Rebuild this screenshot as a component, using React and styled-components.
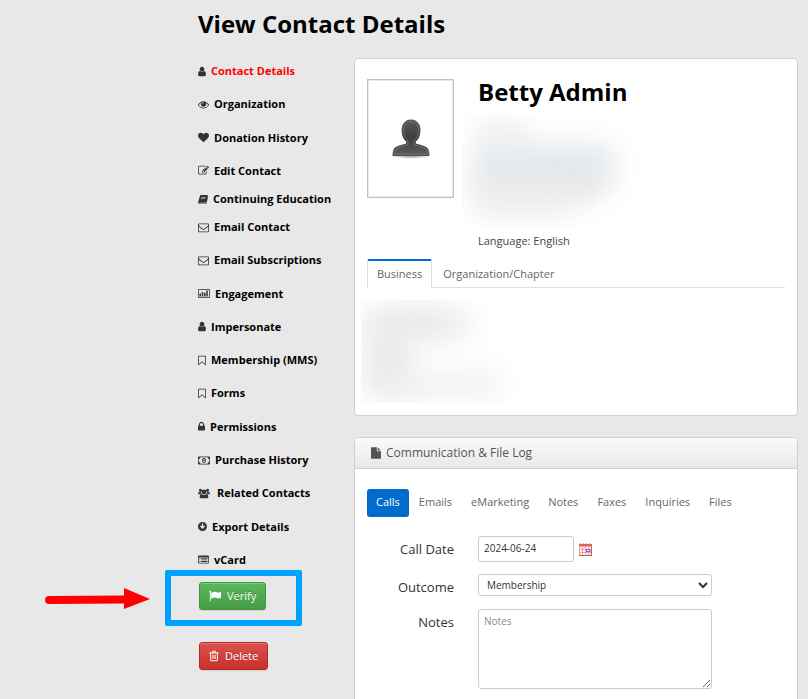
import React, { useState } from "react";
import styled, { createGlobalStyle } from "styled-components";

const GlobalStyle = createGlobalStyle`
  * { box-sizing: border-box; }
  html { scrollbar-width: none; }
  body {
    margin: 0;
    background: #e8e8e8;
    color: #444;
    font-family: "Open Sans", "Noto Sans", sans-serif;
    font-size: 11px;
    line-height: 18px;
  }
  button, input, select, textarea { font: inherit; }
`;

const Page = styled.div`
  padding: 8px 10px 0 198px;
`;

const Title = styled.h1`
  margin: 0 0 18px;
  color: #000;
  font-size: 24px;
  line-height: 32px;
`;

const Columns = styled.div`
  display: grid;
  grid-template-columns: 156px minmax(0, 1fr);
`;

const Sidebar = styled.aside`
  padding-top: 4px;
`;

const NavList = styled.ul`
  display: flex;
  flex-direction: column;
  justify-content: space-between;
  height: ${({ $height }) => $height}px;
  margin: 0 0 10px;
  padding: 0;
  list-style: none;
`;

const NavLink = styled.a`
  display: flex;
  align-items: center;
  gap: ${({ $wide }) => ($wide ? 7 : 5)}px;
  color: ${({ $active }) => ($active ? "#ff0000" : "#000")};
  font-weight: bold;
  text-decoration: none;
  white-space: nowrap;
`;

const Icon = styled.svg`
  flex: none;
  width: ${({ $width }) => $width}px;
  height: ${({ $height = 11 }) => $height}px;
  color: ${({ $color = "#333" }) => $color};
  fill: currentColor;
`;

const Actions = styled.div`
  display: flex;
  flex-direction: column;
  align-items: flex-start;
  gap: 32px;
  margin: 13px 0 0 1px;
`;

const ActionButton = styled.button`
  display: flex;
  align-items: center;
  gap: 6px;
  height: 28px;
  padding: 0 9px;
  border: 1px solid ${({ $danger }) => ($danger ? "#b52b27" : "#419641")};
  border-radius: 3px;
  background: ${({ $danger }) =>
    $danger
      ? "linear-gradient(#d9534f, #c9302c)"
      : "linear-gradient(#5cb85c, #449d44)"};
  box-shadow: inset 0 1px 0 rgba(255, 255, 255, 0.2), 0 1px 1px rgba(0, 0, 0, 0.1);
  color: #fff;
  text-shadow: 0 -1px 0 rgba(0, 0, 0, 0.25);
`;

const Highlighted = styled.div`
  position: relative;
`;

const Callout = styled.div`
  position: absolute;
  top: -12px;
  left: -34px;
  width: 137px;
  height: 56px;
  border: 6px solid #00a2ff;
  border-radius: 2px;
  pointer-events: none;
`;

const Arrow = styled.svg`
  position: absolute;
  top: 6px;
  left: -154px;
  width: 106px;
  height: 22px;
`;

const Main = styled.main`
  display: flex;
  flex-direction: column;
  gap: 21px;
`;

const Card = styled.section`
  border: 1px solid #d0d0d0;
  border-radius: 4px;
  background: #fff;
`;

const CardBody = styled.div`
  padding: 20px 12px 12px;
`;

const Profile = styled.div`
  display: flex;
  gap: 24px;
`;

const Photo = styled.div`
  display: grid;
  place-items: center;
  width: 87px;
  height: 119px;
  border: 1px solid #c3c3c3;
  box-shadow: inset 0 0 0 1px #e8e8e8;
`;

const Name = styled.h2`
  margin: 0 0 10px;
  color: #000;
  font-size: 24px;
  line-height: 26px;
`;

const Hidden = styled.div`
  position: relative;
  overflow: hidden;
  width: ${({ $width }) => $width}px;
  height: ${({ $height }) => $height}px;
  margin-left: ${({ $outdent }) => -$outdent}px;
`;

const Smudge = styled.div`
  position: absolute;
  top: ${({ $top }) => $top}px;
  left: ${({ $left }) => $left}px;
  width: ${({ $width }) => $width}px;
  height: ${({ $height }) => $height}px;
  background: ${({ $color = "#ebebeb" }) => $color};
  filter: blur(14px);
`;

const Language = styled.p`
  margin: 5px 0 9px;
`;

const Tabs = styled.div`
  display: flex;
  gap: 1px;
  height: 29px;
  margin-bottom: 12px;
  border-bottom: 1px solid #ddd;
`;

const Tab = styled.button`
  height: 29px;
  padding: 0 9px 2px;
  border: 1px solid ${({ $active }) => ($active ? "#ddd" : "transparent")};
  border-top: 2px solid ${({ $active }) => ($active ? "#006dcc" : "transparent")};
  border-bottom: 0;
  border-radius: 2px 2px 0 0;
  background: ${({ $active }) => ($active ? "#fff" : "transparent")};
  color: #666;
`;

const CardHeader = styled.header`
  display: flex;
  align-items: center;
  gap: 5px;
  height: 31px;
  padding: 0 16px;
  border-bottom: 1px solid #d0d0d0;
  border-radius: 4px 4px 0 0;
  background: linear-gradient(#fafafa, #e8e8e8);
`;

const CardTitle = styled.h3`
  margin: 0;
  color: #555;
  font-size: 12px;
  font-weight: normal;
`;

const Pills = styled.div`
  display: flex;
  gap: 1px;
  margin-bottom: 19px;
`;

const Pill = styled.button`
  height: 28px;
  padding: 0 9px 2px;
  border: 0;
  border-radius: 3px;
  background: ${({ $active }) => ($active ? "#006dcc" : "transparent")};
  color: ${({ $active }) => ($active ? "#fff" : "#666")};
`;

const FormRow = styled.div`
  display: grid;
  grid-template-columns: 87px minmax(0, 1fr);
  align-items: start;
  column-gap: 24px;
  margin-bottom: 12px;
`;

const Label = styled.label`
  padding: 4px 0 1px;
  color: #333;
  font-size: 13px;
  text-align: right;
`;

const Field = styled.div`
  display: flex;
  align-items: center;
  gap: 5px;
`;

const DateInput = styled.input`
  width: 96px;
  height: 26px;
  padding: 0 5px 2px;
  border: 1px solid #ccc;
  border-radius: 3px;
  color: #333;
  font-size: 10px;
`;

const CalendarButton = styled.button`
  display: flex;
  padding: 0;
  border: 0;
  background: none;
`;

const Select = styled.select`
  width: 234px;
  height: 22px;
  padding: 0 4px;
  border: 1px solid #ccc;
  border-radius: 3px;
  background: #fff;
  color: #333;
  font-size: 10px;
`;

const TextArea = styled.textarea`
  display: block;
  width: 234px;
  height: 80px;
  padding: 2px 5px;
  border: 1px solid #ccc;
  border-radius: 3px;
  font-size: 10px;
  &::placeholder { color: #888; }
`;

const icons = {
  user: {
    box: "256 0 1280 1792",
    width: 8,
    d: "M1536 1399q0 109-62.5 187t-150.5 78h-854q-88 0-150.5-78t-62.5-187q0-85 8.5-160.5t31.5-152 58.5-131 94-89 134.5-34.5q131 128 313 128t313-128q76 0 134.5 34.5t94 89 58.5 131 31.5 152 8.5 160.5zm-256-887q0 159-112.5 271.5t-271.5 112.5-271.5-112.5-112.5-271.5 112.5-271.5 271.5-112.5 271.5 112.5 112.5 271.5z",
  },
  eye: {
    d: "M1664 960q-152-236-381-353 61 104 61 225 0 185-131.5 316.5t-316.5 131.5-316.5-131.5-131.5-316.5q0-121 61-225-229 117-381 353 133 205 333.5 326.5t434.5 121.5 434.5-121.5 333.5-326.5zm-720-384q0-20-14-34t-34-14q-125 0-214.5 89.5t-89.5 214.5q0 20 14 34t34 14 34-14 14-34q0-86 61-147t147-61q20 0 34-14t14-34zm848 384q0 34-20 69-140 230-376.5 368.5t-499.5 138.5-499.5-139-376.5-368q-20-35-20-69t20-69q140-229 376.5-368t499.5-139 499.5 139 376.5 368q20 35 20 69z",
  },
  heart: {
    d: "M896 1664q-26 0-44-18l-624-602q-10-8-27.5-26t-55.5-65.5-68-97.5-53.5-121-23.5-138q0-220 127-344t351-124q62 0 126.5 21.5t120 58 95.5 68.5 76 68q36-36 76-68t95.5-68.5 120-58 126.5-21.5q224 0 351 124t127 344q0 221-229 450l-623 600q-18 18-44 18z",
  },
  edit: {
    d: "M888 1184l116-116-152-152-116 116v56h96v96h56zm440-720q-16-16-33 1l-350 350q-17 17-1 33t33-1l350-350q17-17 1-33zm80 594v190q0 119-84.5 203.5t-203.5 84.5h-832q-119 0-203.5-84.5t-84.5-203.5v-832q0-119 84.5-203.5t203.5-84.5h832q63 0 117 25 15 7 18 23 3 17-9 29l-49 49q-14 14-32 8-23-6-45-6h-832q-66 0-113 47t-47 113v832q0 66 47 113t113 47h832q66 0 113-47t47-113v-126q0-13 9-22l64-64q15-15 35-7t20 29zm-96-738l288 288-672 672h-288v-288zm444 132l-92 92-288-288 92-92q28-28 68-28t68 28l152 152q28 28 28 68t-28 68z",
  },
  book: {
    box: "64 0 1664 1792",
    width: 10,
    d: "M560 130H1560Q1760 180 1715 400L1440 1310Q1400 1420 1290 1430H290Q230 1440 230 1490Q240 1550 330 1550H1360L1630 640L1728 600L1450 1560Q1410 1664 1300 1664H310Q80 1640 64 1400L400 270Q450 140 560 130ZM640 480L610 570H1310L1340 480ZM560 740L530 830H1230L1260 740Z",
  },
  envelope: {
    d: "M1664 1504v-768q-32 36-69 66-268 206-426 338-51 43-83 67t-86.5 48.5-102.5 24.5h-2q-48 0-102.5-24.5t-86.5-48.5-83-67q-158-132-426-338-37-30-69-66v768q0 13 9.5 22.5t22.5 9.5h1472q13 0 22.5-9.5t9.5-22.5zm0-1051v-24.5l-.5-13-3-12.5-5.5-9-9-7.5-14-2.5h-1472q-13 0-22.5 9.5t-9.5 22.5q0 168 147 284 193 152 401 317 6 5 35 29.5t46 37.5 44.5 31.5 50.5 27.5 43 9h2q20 0 43-9t50.5-27.5 44.5-31.5 46-37.5 35-29.5q208-165 401-317 54-43 100.5-115.5t46.5-131.5zm128-37v1088q0 66-47 113t-113 47h-1472q-66 0-113-47t-47-113v-1088q0-66 47-113t113-47h1472q66 0 113 47t47 113z",
  },
  chart: {
    box: "0 0 2048 1792",
    width: 12,
    d: "M160 128H1888Q2048 128 2048 288V1504Q2048 1664 1888 1664H160Q0 1664 0 1504V288Q0 128 160 128ZM128 256V1536H1920V256ZM256 896H512V1408H256ZM640 640H896V1408H640ZM1024 768H1280V1408H1024ZM1408 384H1664V1408H1408Z",
  },
  bookmark: {
    box: "256 0 1280 1792",
    width: 8,
    d: "M1408 256h-1024v1242l423-406 89-85 89 85 423 406v-1242zm12-128q23 0 44 9 33 13 52.5 41t19.5 62v1289q0 34-19.5 62t-52.5 41q-19 8-44 8-48 0-83-32l-441-424-441 424q-36 33-83 33-23 0-44-9-33-13-52.5-41t-19.5-62v-1289q0-34 19.5-62t52.5-41q21-9 44-9h1048z",
  },
  lock: {
    box: "320 0 1152 1792",
    width: 7,
    d: "M640 768h512v-192q0-106-75-181t-181-75-181 75-75 181v192zm832 96v576q0 40-28 68t-68 28h-960q-40 0-68-28t-28-68v-576q0-40 28-68t68-28h32v-192q0-184 132-316t316-132 316 132 132 316v192h32q40 0 68 28t28 68z",
  },
  money: {
    box: "0 0 1920 1792",
    width: 12,
    d: "M64 256H1856Q1920 256 1920 320V1472Q1920 1536 1856 1536H64Q0 1536 0 1472V320Q0 256 64 256ZM384 384Q370 630 128 640V1152Q370 1162 384 1408H1536Q1550 1162 1792 1152V640Q1550 630 1536 384ZM960 480C1170 480 1280 680 1280 896S1170 1312 960 1312S640 1112 640 896S750 480 960 480ZM880 640L768 740L830 800L900 750V1024H780V1120H1140V1024H1020V640Z",
  },
  users: {
    box: "0 0 1920 1792",
    width: 12,
    d: "M384 128A256 256 0 1 1 384 640A256 256 0 1 1 384 128ZM1536 128A256 256 0 1 1 1536 640A256 256 0 1 1 1536 128ZM960 256A384 384 0 1 1 960 1024A384 384 0 1 1 960 256ZM0 980Q0 640 128 640Q330 760 512 680Q500 810 593 896Q440 900 330 1024H120Q0 1020 0 980ZM1920 980Q1920 640 1792 640Q1590 760 1408 680Q1420 810 1327 896Q1480 900 1590 1024H1800Q1920 1020 1920 980ZM560 970Q960 1280 1360 970Q1664 970 1664 1450Q1660 1660 1450 1664H480Q260 1660 256 1450Q256 970 560 970Z",
  },
  download: {
    box: "128 0 1536 1792",
    width: 9,
    d: "M896 128A768 768 0 1 1 896 1664A768 768 0 1 1 896 128ZM784 400V900L600 720L450 870L896 1320L1342 870L1192 720L1008 900V400Z",
  },
  list: {
    d: "M160 256H1632Q1792 256 1792 416V1376Q1792 1536 1632 1536H160Q0 1536 0 1376V416Q0 256 160 256ZM128 560V1408H1664V560ZM256 640H384V768H256ZM512 640H1536V768H512ZM256 900H384V1028H256ZM512 900H1536V1028H512ZM256 1160H384V1288H256ZM512 1160H1536V1288H512Z",
  },
  flag: {
    d: "M320 256q0 72-64 110v1266q0 13-9.5 22.5t-22.5 9.5h-64q-13 0-22.5-9.5t-9.5-22.5v-1266q-64-38-64-110 0-53 37.5-90.5t90.5-37.5 90.5 37.5 37.5 90.5zm1472 64v763q0 25-12.5 38.5t-39.5 27.5q-215 116-369 116-61 0-123.5-22t-108.5-48-115.5-48-142.5-22q-192 0-464 146-17 9-33 9-26 0-45-19t-19-45v-742q0-32 31-55 21-14 79-43 236-120 421-120 107 0 200 29t219 88q38 19 88 19 54 0 117.5-21t110-47 88-47 54.5-21q26 0 45 19t19 45z",
  },
  trash: {
    box: "192 0 1408 1792",
    width: 10,
    d: "M704 736v576q0 14-9 23t-23 9h-64q-14 0-23-9t-9-23v-576q0-14 9-23t23-9h64q14 0 23 9t9 23zm256 0v576q0 14-9 23t-23 9h-64q-14 0-23-9t-9-23v-576q0-14 9-23t23-9h64q14 0 23 9t9 23zm256 0v576q0 14-9 23t-23 9h-64q-14 0-23-9t-9-23v-576q0-14 9-23t23-9h64q14 0 23 9t9 23zm128 724v-948h-896v948q0 22 7 40.5t14.5 27 10.5 8.5h832q3 0 10.5-8.5t14.5-27 7-40.5zm-672-1076h448l-48-117q-7-9-17-11h-317q-10 2-17 11zm928 32v64q0 14-9 23t-23 9h-96v948q0 83-47 143.5t-113 60.5h-832q-66 0-113-58.5t-47-141.5v-952h-96q-14 0-23-9t-9-23v-64q0-14 9-23t23-9h309l70-167q15-37 54-63t79-26h320q40 0 79 26t54 63l70 167h309q14 0 23 9t9 23z",
  },
  file: {
    box: "128 0 1536 1792",
    width: 10,
    d: "M1152 512v-472q22 14 36 28l408 408q14 14 28 36h-472zm-128 32q0 40 28 68t68 28h544v1056q0 40-28 68t-68 28h-1344q-40 0-68-28t-28-68v-1600q0-40 28-68t68-28h800v544z",
  },
};

const FontIcon = ({ name, color, width, height }) => {
  const icon = icons[name];
  return (
    <Icon
      viewBox={icon.box || "0 0 1792 1792"}
      $width={width || icon.width || 11}
      $height={height}
      $color={color}
      aria-hidden="true"
    >
      <path fillRule={name === "users" ? "nonzero" : "evenodd"} d={icon.d} />
    </Icon>
  );
};

const navGroups = [
  {
    height: 118,
    items: [
      { icon: "user", text: "Contact Details", active: true },
      { icon: "eye", text: "Organization" },
      { icon: "heart", text: "Donation History" },
      { icon: "edit", text: "Edit Contact" },
    ],
  },
  { height: 18, items: [{ icon: "book", text: "Continuing Education" }] },
  {
    height: 351,
    items: [
      { icon: "envelope", text: "Email Contact" },
      { icon: "envelope", text: "Email Subscriptions" },
      { icon: "chart", text: "Engagement" },
      { icon: "user", text: "Impersonate" },
      { icon: "bookmark", text: "Membership (MMS)" },
      { icon: "bookmark", text: "Forms" },
      { icon: "lock", text: "Permissions" },
      { icon: "money", text: "Purchase History" },
      { icon: "users", text: "Related Contacts", wide: true },
      { icon: "download", text: "Export Details" },
      { icon: "list", text: "vCard" },
    ],
  },
];

const logTypes = ["Calls", "Emails", "eMarketing", "Notes", "Faxes", "Inquiries", "Files"];

const Avatar = () => (
  <svg width="40" height="42" viewBox="0 0 40 42" aria-hidden="true">
    <defs>
      <linearGradient id="body" x1="0" y1="0" x2="0" y2="1">
        <stop offset="0" stopColor="#5a5c5c" />
        <stop offset="0.5" stopColor="#3c3e3e" />
        <stop offset="1" stopColor="#5c5e5e" />
      </linearGradient>
      <radialGradient id="shadow">
        <stop offset="0" stopColor="#000" stopOpacity="0.4" />
        <stop offset="1" stopColor="#000" stopOpacity="0" />
      </radialGradient>
    </defs>
    <ellipse cx="20" cy="38" rx="20" ry="3" fill="url(#shadow)" />
    <path
      d="M20 2c6 0 9 4.500 9 10.500 0 5-2 9-4.500 11v2.500c4 1 9 2 11.500 4 1.500 1.500 2 5 2 7.500H2c0-2.500.5-6 2-7.500 2.500-2 7.500-3 11.500-4v-2.500c-2.500-2-4.500-6-4.500-11C11 6.500 14 2 20 2z"
      fill="url(#body)"
      stroke="#4a4c4c"
    />
    <path
      d="M20 3.500c5 0 7.500 3.500 7.500 9 0 4.500-2 8-4.300 10.200v4c4 1.800 9 2.200 11.800 4.500 1 1 1.300 3.300 1.400 5.100H3.600c.1-1.800.4-4.100 1.400-5.100 2.800-2.300 7.800-2.700 11.800-4.500v-4c-2.300-2.200-4.300-5.700-4.300-10.200 0-5.500 2.500-9 7.500-9z"
      fill="none"
      stroke="#7c7e7e"
      strokeWidth="0.700"
    />
  </svg>
);

const Calendar = () => (
  <svg width="13" height="13" viewBox="0 0 13 13" aria-hidden="true">
    <rect y="1" width="13" height="12" fill="#f0a09b" />
    <rect y="1" width="13" height="2" fill="#dd6560" />
    <path d="M1 0h1v1H1zM4 0h1v1H4zM7 0h1v1H7zM10 0h1v1h-1z" fill="#d9a09c" />
    <path d="M1 4h2v2H1zM4 4h2v2H4zM7 4h2v2H7zM10 4h2v2h-2zM1 7h2v2H1zM4 7h2v2H4zM1 10h2v2H1zM4 10h2v2H4zM7 10h2v2H7zM10 10h2v2h-2z" fill="#fff1f0" />
    <rect x="7.500" y="6.500" width="3" height="2" fill="#fff" stroke="#5573dd" />
    <path d="M0 12h13v1H0zM12 3h1v10h-1z" fill="#c9605b" />
  </svg>
);

const App = () => {
  const [logType, setLogType] = useState("Calls");
  const [tab, setTab] = useState("Business");

  return (
    <>
      <GlobalStyle />
      <Page>
        <Title>View Contact Details</Title>
        <Columns>
          <Sidebar>
            <nav>
              {navGroups.map((group) => (
                <NavList key={group.height} $height={group.height}>
                  {group.items.map((item) => (
                    <li key={item.text}>
                      <NavLink href="#" $active={item.active} $wide={item.wide}>
                        <FontIcon name={item.icon} />
                        {item.text}
                      </NavLink>
                    </li>
                  ))}
                </NavList>
              ))}
            </nav>
            <Actions>
              <Highlighted>
                <ActionButton type="button">
                  <FontIcon name="flag" color="#fff" width={12} height={12} />
                  Verify
                </ActionButton>
                <Callout />
                <Arrow viewBox="0 0 106 22" aria-hidden="true">
                  <path d="M4 12L80 11.500" stroke="#f00" strokeWidth="8" strokeLinecap="round" />
                  <path d="M79 0L105 11L79 21Z" fill="#f00" />
                </Arrow>
              </Highlighted>
              <ActionButton type="button" $danger>
                <FontIcon name="trash" color="#fff" height={12} />
                Delete
              </ActionButton>
            </Actions>
          </Sidebar>

          <Main>
            <Card>
              <CardBody>
                <Profile>
                  <Photo>
                    <Avatar />
                  </Photo>
                  <div>
                    <Name>Betty Admin</Name>
                    <Hidden $width={180} $height={112} $outdent={16}>
                      <Smudge $top={8} $left={16} $width={50} $height={26} $color="#ededed" />
                      <Smudge $top={30} $left={14} $width={138} $height={36} $color="#e2e8ed" />
                      <Smudge $top={60} $left={14} $width={128} $height={20} $color="#dfdfdf" />
                      <Smudge $top={76} $left={14} $width={100} $height={22} />
                    </Hidden>
                    <Language>Language: English</Language>
                  </div>
                </Profile>
                <Tabs>
                  {["Business", "Organization/Chapter"].map((name) => (
                    <Tab key={name} type="button" $active={tab === name} onClick={() => setTab(name)}>
                      {name}
                    </Tab>
                  ))}
                </Tabs>
                <Hidden $width={180} $height={103} $outdent={6}>
                  <Smudge $top={8} $left={6} $width={98} $height={32} $color="#e8e8e8" />
                  <Smudge $top={30} $left={6} $width={42} $height={58} $color="#e8e8e8" />
                  <Smudge $top={74} $left={8} $width={130} $height={20} />
                </Hidden>
              </CardBody>
            </Card>

            <Card>
              <CardHeader>
                <FontIcon name="file" color="#555" height={12} />
                <CardTitle>Communication &amp; File Log</CardTitle>
              </CardHeader>
              <CardBody>
                <Pills>
                  {logTypes.map((type) => (
                    <Pill key={type} type="button" $active={logType === type} onClick={() => setLogType(type)}>
                      {type}
                    </Pill>
                  ))}
                </Pills>
                <FormRow>
                  <Label htmlFor="callDate">Call Date</Label>
                  <Field>
                    <DateInput id="callDate" type="text" defaultValue="2024-06-24" />
                    <CalendarButton type="button" aria-label="Choose date">
                      <Calendar />
                    </CalendarButton>
                  </Field>
                </FormRow>
                <FormRow>
                  <Label htmlFor="outcome">Outcome</Label>
                  <Field>
                    <Select id="outcome" defaultValue="Membership">
                      <option>Membership</option>
                    </Select>
                  </Field>
                </FormRow>
                <FormRow>
                  <Label htmlFor="notes">Notes</Label>
                  <TextArea id="notes" placeholder="Notes" />
                </FormRow>
              </CardBody>
            </Card>
          </Main>
        </Columns>
      </Page>
    </>
  );
};

export default App;
